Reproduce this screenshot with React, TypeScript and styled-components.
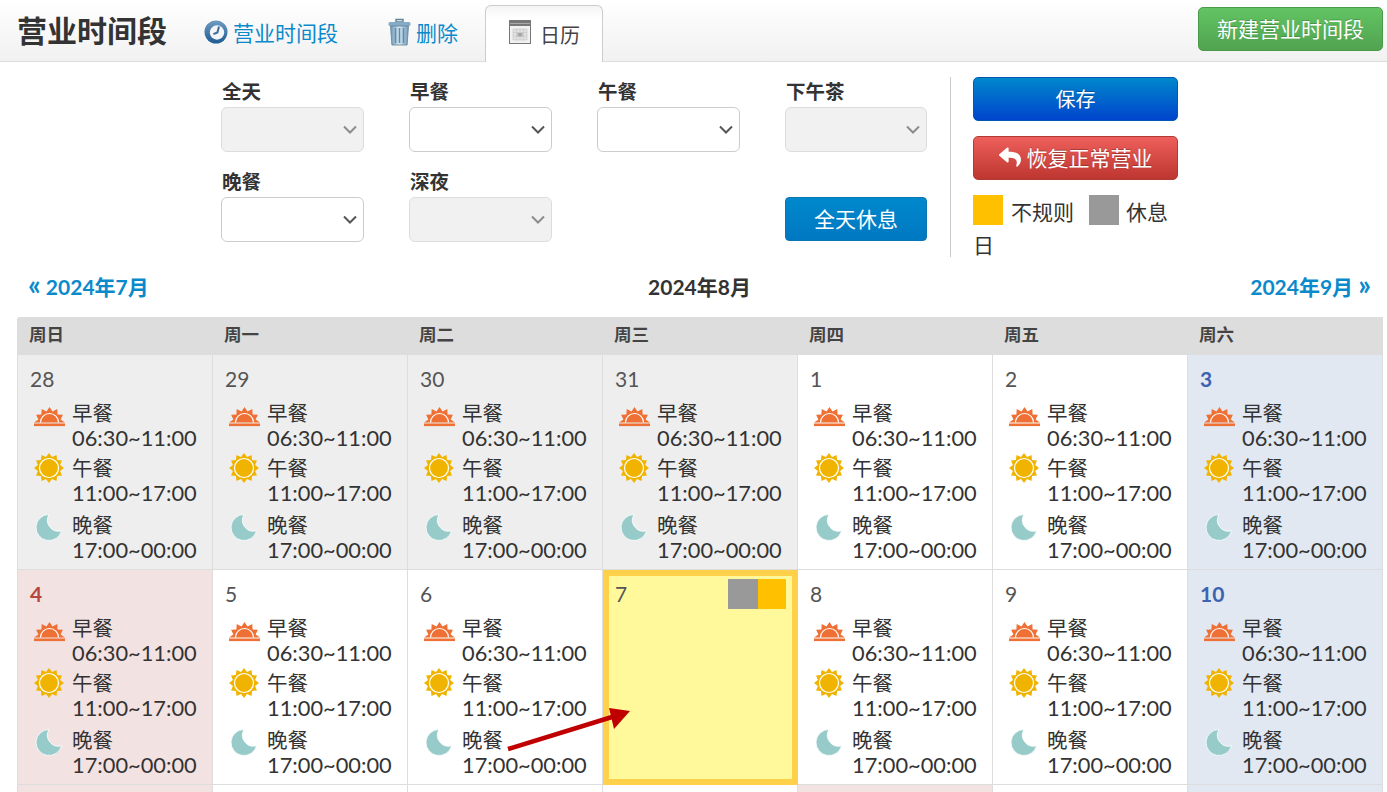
import styled, { createGlobalStyle } from "styled-components";
import { FaReply } from "react-icons/fa";

const GlobalStyle = createGlobalStyle`
  html, body {
    margin: 0;
    padding: 0;
    height: 792px;
    overflow: hidden;
    background: #fff;
    color: #333;
    font-family: Lato, "Noto Sans CJK SC", sans-serif;
  }
`;

const Page = styled.div`
  position: relative;
  width: 1387px;
  height: 792px;
  overflow: hidden;
`;

const Header = styled.header`
  display: flex;
  align-items: flex-end;
  height: 61px;
  padding: 0 4px 0 17px;
  border-bottom: 1px solid #ddd;
  background: linear-gradient(#fff, #f1f1f1);
`;

const Title = styled.h1`
  align-self: center;
  margin: 0 37px 0 0;
  font-size: 30px;
  line-height: 61px;
  font-weight: 700;
  color: #333;
`;

const TabLink = styled.a`
  display: flex;
  align-items: center;
  gap: 5px;
  align-self: center;
  height: 40px;
  margin: 2px 50px 0 0;
  font-size: 21px;
  color: #0a8acb;
  cursor: pointer;
`;

const ActiveTab = styled.div`
  display: flex;
  align-items: center;
  gap: 9px;
  box-sizing: border-box;
  width: 118px;
  height: 57px;
  margin: 0 0 -1px -23px;
  padding: 0 0 0 23px;
  border: 1px solid #ccc;
  border-bottom: 0;
  border-radius: 6px 6px 0 0;
  background: linear-gradient(#f4f4f4, #fff 12px);
  font-size: 20px;
  color: #444;

  svg {
    margin-bottom: 4px;
  }
`;

const NewButton = styled.button`
  margin: 0 0 10px auto;
  width: 185px;
  height: 44px;
  padding: 0 0 3px;
  border: 1px solid #4a9a4a;
  border-radius: 5px;
  background: linear-gradient(#62c462, #51a351);
  color: #fff;
  font: inherit;
  font-size: 21px;
  text-shadow: 0 -1px 0 rgba(0, 0, 0, 0.2);
`;

const Toolbar = styled.section`
  display: flex;
  height: 180px;
  padding: 15px 0 0 221px;
`;

const FieldGrid = styled.div`
  display: grid;
  grid-template-columns: repeat(3, 143px) 142px;
  grid-auto-rows: 90px;
  column-gap: 45px;
  width: 707px;
`;

const Field = styled.label`
  display: block;
`;

const FieldLabel = styled.div`
  height: 30px;
  padding-left: 1px;
  font-size: 19.5px;
  line-height: 29px;
  font-weight: 700;
  color: #333;
`;

const SelectBox = styled.div<{ $disabled?: boolean }>`
  display: flex;
  align-items: center;
  justify-content: flex-end;
  box-sizing: border-box;
  height: 45px;
  padding-right: 6px;
  border: 1px solid ${({ $disabled }) => ($disabled ? "#ddd" : "#ccc")};
  border-radius: 6px;
  background: ${({ $disabled }) => ($disabled ? "#f1f1f1" : "#fff")};
  color: ${({ $disabled }) => ($disabled ? "#8c8c8c" : "#555")};
`;

const OffButton = styled.button`
  align-self: start;
  height: 44px;
  margin-top: 30px;
  padding: 0 0 3px;
  border: 1px solid #0a76b4;
  border-radius: 4px;
  background: linear-gradient(#0088cc, #0078c2);
  color: #fff;
  font: inherit;
  font-size: 21px;
`;

const Side = styled.div`
  box-sizing: border-box;
  width: 228px;
  height: 180px;
  margin-left: 22px;
  padding-left: 22px;
  border-left: 1px solid #ccc;
`;

const SideButton = styled.button<{ $tone: "blue" | "red" }>`
  display: flex;
  align-items: center;
  justify-content: center;
  gap: 6px;
  box-sizing: border-box;
  width: 205px;
  height: 44px;
  margin-bottom: 15px;
  padding: 0 0 2px;
  border: 1px solid ${({ $tone }) => ($tone === "blue" ? "#0058b0" : "#b23a35")};
  border-radius: 5px;
  background: ${({ $tone }) =>
    $tone === "blue"
      ? "linear-gradient(#0088cc, #0044cc)"
      : "linear-gradient(#ee5f5b, #bd362f)"};
  color: #fff;
  font: inherit;
  font-size: ${({ $tone }) => ($tone === "blue" ? "20px" : "21px")};
  text-shadow: 0 -1px 0 rgba(0, 0, 0, 0.25);
`;

const Legend = styled.div`
  margin-top: 2px;
  font-size: 21px;
  line-height: 33px;
  color: #333;
`;

const Swatch = styled.span<{ $color: string }>`
  display: inline-block;
  width: 30px;
  height: 30px;
  margin-right: 7px;
  vertical-align: top;
  background: ${({ $color }) => $color};
`;

const LegendText = styled.span`
  margin-left: 1px;
  margin-right: 15px;
`;

const MonthNav = styled.nav`
  display: flex;
  align-items: center;
  justify-content: space-between;
  height: 30px;
  margin-top: 14px;
  padding: 0 16px 0 28px;
  font-size: 21px;
  font-weight: 700;
`;

const MonthLink = styled.a`
  color: #0a8acb;
  cursor: pointer;
`;

const Quote = styled.span`
  font-size: 28px;
  line-height: 21px;
`;

const MonthTitle = styled.span`
  color: #333;
`;

const Calendar = styled.div`
  margin: 16px 4px 0 17px;
`;

const WeekRow = styled.div`
  display: grid;
  grid-template-columns: repeat(7, 195px);
  height: 38px;
  border-top-left-radius: 3px;
  background: #ddd;
`;

const WeekDay = styled.div`
  padding-left: 12px;
  font-size: 17.5px;
  line-height: 36px;
  font-weight: 700;
  color: #444;
`;

const DayGrid = styled.div`
  display: grid;
  grid-template-columns: repeat(7, 195px);
  grid-auto-rows: 215px;
  border-left: 1px solid #ddd;
`;

const cellColors = {
  plain: "#fff",
  past: "#eee",
  sat: "#e1e8f1",
  sun: "#f3e2e2",
};

const DayCell = styled.div<{ $kind: keyof typeof cellColors }>`
  position: relative;
  box-sizing: border-box;
  padding: 12px 0 0 12px;
  border-right: 1px solid #ddd;
  border-bottom: 1px solid #ddd;
  background: ${({ $kind }) => cellColors[$kind]};
`;

const SpecialCell = styled.div`
  position: relative;
  box-sizing: border-box;
  padding: 6px 0 0 6px;
  border: 6px solid #ffd04a;
  background: #fff99b;
`;

const DayNumber = styled.div<{ $tone?: "sat" | "sun" }>`
  height: 24px;
  font-size: 21px;
  line-height: 24px;
  font-weight: ${({ $tone }) => ($tone ? 700 : 400)};
  color: ${({ $tone }) =>
    $tone === "sat" ? "#3d63b0" : $tone === "sun" ? "#b5473f" : "#555"};
`;

const Marks = styled.div`
  position: absolute;
  top: 3px;
  right: 6px;
  display: flex;
`;

const Mark = styled.span<{ $color: string; $width: number }>`
  width: ${({ $width }) => $width}px;
  height: 30px;
  background: ${({ $color }) => $color};
`;

const Meals = styled.div`
  margin-top: 10px;
`;

const Meal = styled.div<{ $last?: boolean }>`
  display: flex;
  gap: 5px;
  height: 55px;
  margin-top: ${({ $last }) => ($last ? "2px" : "0")};
`;

const MealIcon = styled.div<{ $top: number }>`
  display: flex;
  align-items: center;
  justify-content: center;
  flex: none;
  width: 36px;
  height: 30px;
  margin: ${({ $top }) => $top}px 0 0 1px;
`;

const MealText = styled.div`
  font-size: 20.5px;
  line-height: 25px;
  color: #333;
`;

const MealTime = styled.div`
  font-size: 21.8px;
  line-height: 24px;
`;

const ArrowLayer = styled.svg`
  position: absolute;
  top: 700px;
  left: 500px;
`;

const ClockIcon = () => (
  <svg width="24" height="24" viewBox="0 0 24 24">
    <defs>
      <linearGradient id="clockRim" x1="0" y1="0" x2="0" y2="1">
        <stop offset="0" stopColor="#6f9cc0" />
        <stop offset="1" stopColor="#1f5a92" />
      </linearGradient>
    </defs>
    <circle cx="12" cy="12" r="11.5" fill="url(#clockRim)" />
    <circle cx="13" cy="12.5" r="7.2" fill="#f2f5f8" />
    <path d="M15 6.5l-1.6 6-4 1.6" fill="none" stroke="#3c6c98" strokeWidth="2" />
  </svg>
);

const TrashIcon = () => (
  <svg width="23" height="28" viewBox="0 0 23 28">
    <defs>
      <linearGradient id="trashBody" x1="0" y1="0" x2="1" y2="0">
        <stop offset="0" stopColor="#6f99b8" />
        <stop offset="0.5" stopColor="#d5e6f2" />
        <stop offset="1" stopColor="#6f99b8" />
      </linearGradient>
    </defs>
    <path d="M8 1.5h7v2.5H8z" fill="none" stroke="#5f8199" strokeWidth="1.4" />
    <rect x="0.5" y="4" width="22" height="4" rx="1.5" fill="#86abc6" />
    <path d="M2.5 8h18l-1.4 19H3.9z" fill="url(#trashBody)" stroke="#5f8199" strokeWidth="0.8" />
    <path d="M7.5 10v15M11.5 10v15M15.5 10v15" stroke="#5f8aab" strokeWidth="1.5" />
  </svg>
);

const CalendarIcon = () => (
  <svg width="22" height="24" viewBox="0 0 22 24">
    <rect x="0.5" y="0.5" width="21" height="23" fill="#f1f1f1" stroke="#777" />
    <rect x="1" y="1" width="20" height="5" fill="#777" />
    <rect x="1" y="3" width="20" height="1" fill="#aaa" />
    <path
      d="M4 9h14v11H4zM4 12.5h14M4 16h14M7.5 9v11M11 9v11M14.5 9v11"
      fill="#e2e2e2"
      stroke="#c6c6c6"
      strokeWidth="0.7"
    />
    <rect x="8.5" y="13" width="5" height="3.5" fill="#a8a8a8" />
  </svg>
);

const Chevron = () => (
  <svg width="14" height="9" viewBox="0 0 14 9">
    <path d="M1 1.5l6 6 6-6" fill="none" stroke="currentColor" strokeWidth="2" />
  </svg>
);

const sunPoints = (cx: number, cy: number, outer: number, inner: number, count: number) =>
  Array.from({ length: count * 2 }, (_, i) => {
    const radius = i % 2 === 0 ? outer : inner;
    const angle = (Math.PI * i) / count - Math.PI / 2;
    return `${(cx + radius * Math.cos(angle)).toFixed(1)},${(cy + radius * Math.sin(angle)).toFixed(1)}`;
  }).join(" ");

const SunriseIcon = () => (
  <svg width="31" height="20" viewBox="0 0 31 20">
    <clipPath id="horizon">
      <rect x="0" y="0" width="31" height="15.5" />
    </clipPath>
    <polygon points={sunPoints(15.5, 15.5, 15.5, 11.5, 12)} fill="#ee7034" clipPath="url(#horizon)" />
    <circle cx="15.5" cy="15.5" r="9" fill="none" stroke="#fff" strokeWidth="1.2" clipPath="url(#horizon)" />
    <rect x="0" y="16.5" width="31" height="2.6" fill="#ee7034" />
  </svg>
);

const SunIcon = () => (
  <svg width="30" height="30" viewBox="0 0 30 30">
    <polygon points={sunPoints(15, 15, 15, 11.5, 12)} fill="#f0b400" />
    <circle cx="15" cy="15" r="9.5" fill="#f0b400" stroke="#fff" strokeWidth="1.2" />
  </svg>
);

const MoonIcon = () => (
  <svg width="28" height="28" viewBox="0 0 28 28">
    <path
      d="M14 1.5a13 13 0 1 0 12.6 16.2A11 11 0 0 1 14 1.5z"
      fill="#97cbca"
      stroke="#fff"
      strokeWidth="0.8"
    />
  </svg>
);

const Select = ({ disabled }: { disabled?: boolean }) => (
  <SelectBox $disabled={disabled}>
    <Chevron />
  </SelectBox>
);

const meals = [
  { name: "早餐", time: "06:30~11:00", icon: <SunriseIcon />, iconTop: 1 },
  { name: "午餐", time: "11:00~17:00", icon: <SunIcon />, iconTop: -3 },
  { name: "晚餐", time: "17:00~00:00", icon: <MoonIcon />, iconTop: -1 },
];

const weekDays = ["周日", "周一", "周二", "周三", "周四", "周五", "周六"];

type Day = { label: string; kind: keyof typeof cellColors };

const days: Day[] = [
  { label: "28", kind: "past" },
  { label: "29", kind: "past" },
  { label: "30", kind: "past" },
  { label: "31", kind: "past" },
  { label: "1", kind: "plain" },
  { label: "2", kind: "plain" },
  { label: "3", kind: "sat" },
  { label: "4", kind: "sun" },
  { label: "5", kind: "plain" },
  { label: "6", kind: "plain" },
  { label: "7", kind: "plain" },
  { label: "8", kind: "plain" },
  { label: "9", kind: "plain" },
  { label: "10", kind: "sat" },
];

const nextRow: Day["kind"][] = ["sun", "plain", "plain", "plain", "sun", "plain", "sat"];

const toneOf = (kind: Day["kind"]) =>
  kind === "sat" ? "sat" : kind === "sun" ? "sun" : undefined;

export default function App() {
  return (
    <Page>
      <GlobalStyle />
      <Header>
        <Title>营业时间段</Title>
        <TabLink>
          <ClockIcon />
          营业时间段
        </TabLink>
        <TabLink>
          <TrashIcon />
          删除
        </TabLink>
        <ActiveTab>
          <CalendarIcon />
          日历
        </ActiveTab>
        <NewButton>新建营业时间段</NewButton>
      </Header>

      <Toolbar>
        <FieldGrid>
          <Field>
            <FieldLabel>全天</FieldLabel>
            <Select disabled />
          </Field>
          <Field>
            <FieldLabel>早餐</FieldLabel>
            <Select />
          </Field>
          <Field>
            <FieldLabel>午餐</FieldLabel>
            <Select />
          </Field>
          <Field>
            <FieldLabel>下午茶</FieldLabel>
            <Select disabled />
          </Field>
          <Field>
            <FieldLabel>晚餐</FieldLabel>
            <Select />
          </Field>
          <Field>
            <FieldLabel>深夜</FieldLabel>
            <Select disabled />
          </Field>
          <span />
          <OffButton>全天休息</OffButton>
        </FieldGrid>
        <Side>
          <SideButton $tone="blue">保存</SideButton>
          <SideButton $tone="red">
            <FaReply size={22} />
            恢复正常营业
          </SideButton>
          <Legend>
            <Swatch $color="#ffc000" />
            <LegendText>不规则</LegendText>
            <Swatch $color="#999" />
            休息日
          </Legend>
        </Side>
      </Toolbar>

      <MonthNav>
        <MonthLink>
          <Quote>«</Quote> 2024年7月
        </MonthLink>
        <MonthTitle>2024年8月</MonthTitle>
        <MonthLink>
          2024年9月 <Quote>»</Quote>
        </MonthLink>
      </MonthNav>

      <Calendar>
        <WeekRow>
          {weekDays.map((day) => (
            <WeekDay key={day}>{day}</WeekDay>
          ))}
        </WeekRow>
        <DayGrid>
          {days.map((day) =>
            day.label === "7" ? (
              <SpecialCell key={day.label}>
                <DayNumber>{day.label}</DayNumber>
                <Marks>
                  <Mark $color="#999" $width={30} />
                  <Mark $color="#ffc000" $width={28} />
                </Marks>
              </SpecialCell>
            ) : (
              <DayCell key={day.label} $kind={day.kind}>
                <DayNumber $tone={toneOf(day.kind)}>{day.label}</DayNumber>
                <Meals>
                  {meals.map((meal, i) => (
                    <Meal key={meal.name} $last={i === 2}>
                      <MealIcon $top={meal.iconTop}>{meal.icon}</MealIcon>
                      <MealText>
                        {meal.name}
                        <MealTime>{meal.time}</MealTime>
                      </MealText>
                    </Meal>
                  ))}
                </Meals>
              </DayCell>
            ),
          )}
          {nextRow.map((kind, i) => (
            <DayCell key={i} $kind={kind} />
          ))}
        </DayGrid>
      </Calendar>

      <ArrowLayer width="140" height="60" viewBox="0 0 140 60">
        <path d="M8 49L112 17" stroke="#c00000" strokeWidth="4.5" fill="none" />
        <polygon points="130,11 109,8 114,29" fill="#c00000" />
      </ArrowLayer>
    </Page>
  );
}
